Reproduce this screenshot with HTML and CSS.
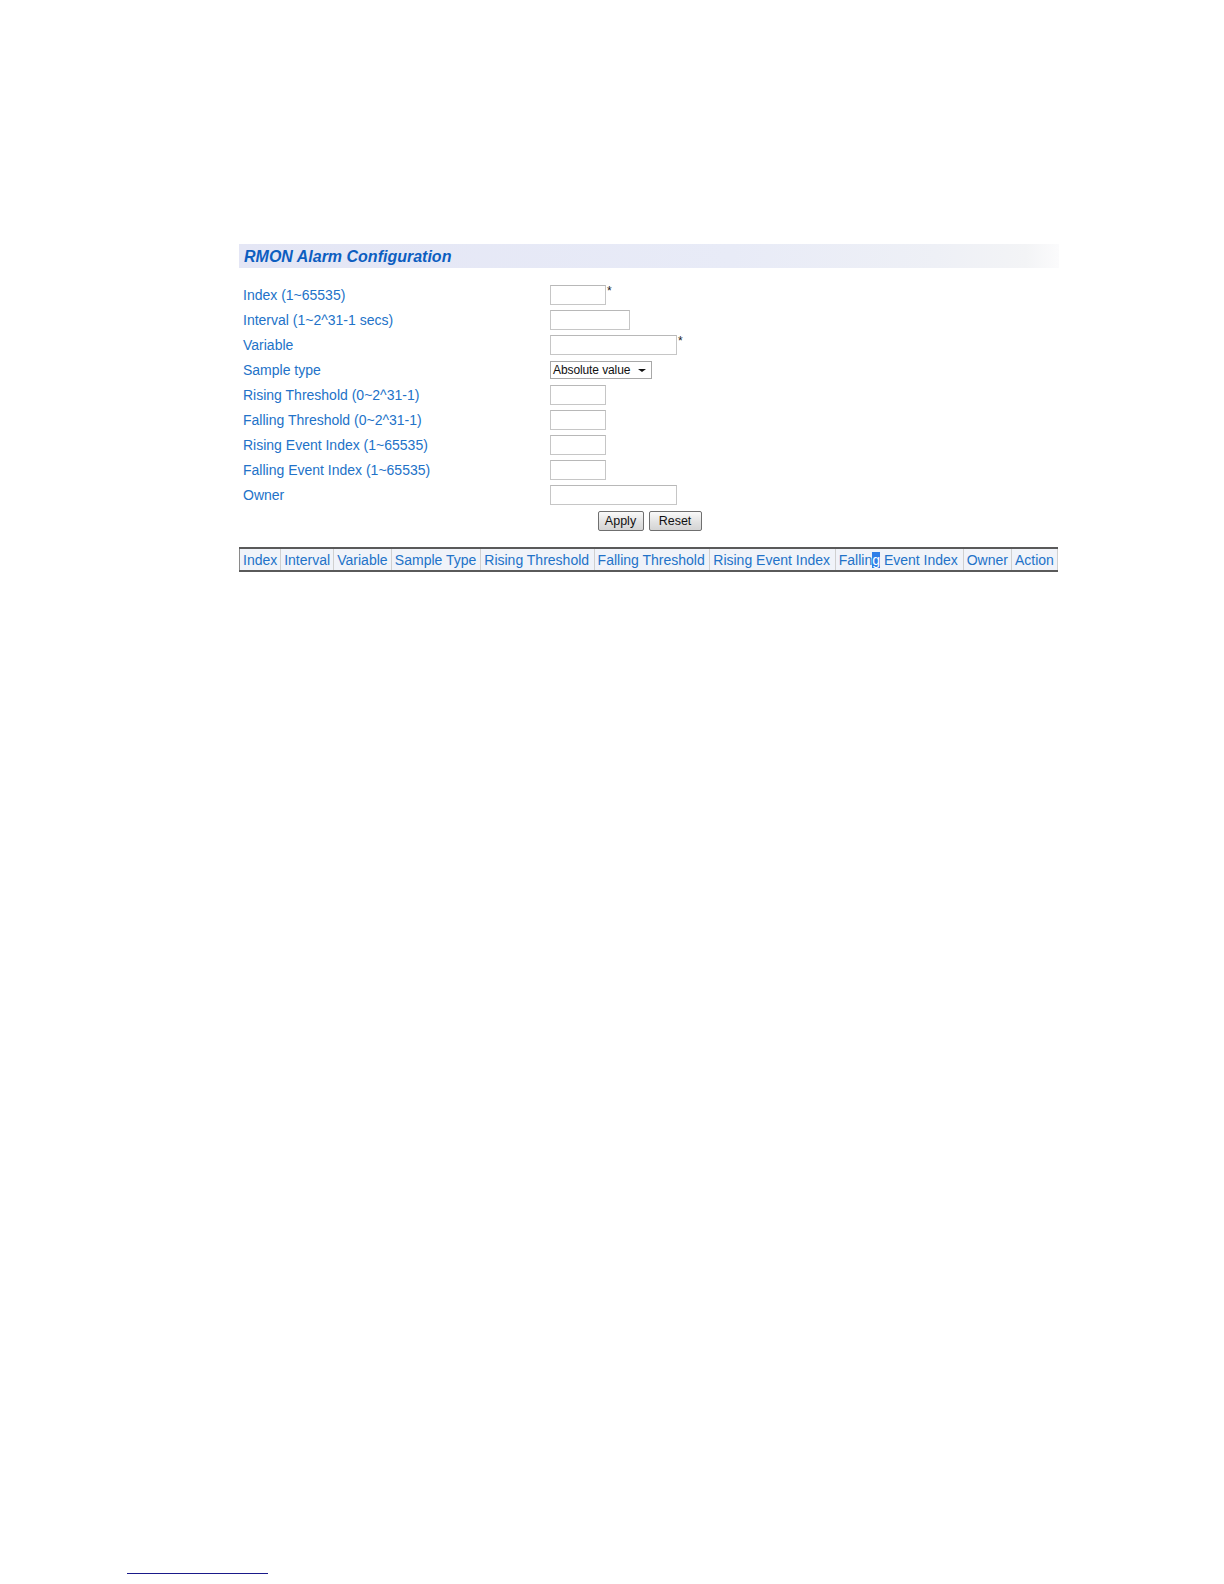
FILE: index.html
```html
<!DOCTYPE html>
<html>
<head>
<meta charset="utf-8">
<link rel="stylesheet" href="styles.css">
</head>
<body>
<div class="page">
  <div class="panel">
    <div class="title">RMON Alarm Configuration</div>
    <form class="form">
      <div class="row"><span class="label">Index (1~65535)</span><span class="field"><input class="in w56" type="text"><span class="req">*</span></span></div>
      <div class="row"><span class="label">Interval (1~2^31-1 secs)</span><span class="field"><input class="in w80" type="text"></span></div>
      <div class="row"><span class="label">Variable</span><span class="field"><input class="in w127" type="text"><span class="req">*</span></span></div>
      <div class="row"><span class="label">Sample type</span><span class="field"><span class="select">Absolute value<span class="arrow"></span></span></span></div>
      <div class="row"><span class="label">Rising Threshold (0~2^31-1)</span><span class="field"><input class="in w56" type="text"></span></div>
      <div class="row"><span class="label">Falling Threshold (0~2^31-1)</span><span class="field"><input class="in w56" type="text"></span></div>
      <div class="row"><span class="label">Rising Event Index (1~65535)</span><span class="field"><input class="in w56" type="text"></span></div>
      <div class="row"><span class="label">Falling Event Index (1~65535)</span><span class="field"><input class="in w56" type="text"></span></div>
      <div class="row"><span class="label">Owner</span><span class="field"><input class="in w127" type="text"></span></div>
      <div class="buttons"><span class="btn apply">Apply</span><span class="btn reset">Reset</span></div>
    </form>
    <table class="list">
      <tr>
        <th>Index</th><th>Interval</th><th>Variable</th><th>Sample Type</th><th>Rising Threshold</th><th>Falling Threshold</th><th>Rising Event Index</th><th>Fallin<span class="sel">g</span> Event Index</th><th>Owner</th><th>Action</th>
      </tr>
    </table>
  </div>
  <div class="footline"></div>
</div>
</body>
</html>
```
FILE: styles.css
```css
html, body {
  margin: 0;
  padding: 0;
  background: #ffffff;
}
body {
  width: 1224px;
  height: 1584px;
  font-family: "Liberation Sans", Arial, sans-serif;
  position: relative;
}
.page {
  padding-top: 244px;
}
.panel {
  margin-left: 239px;
  width: 820px;
}
.title {
  height: 24px;
  line-height: 25px;
  padding-left: 5px;
  font-size: 16px;
  font-weight: bold;
  font-style: italic;
  color: #0d5ec0;
  background: linear-gradient(to right, #e4e6f5 0%, #e8ebf7 60%, #eef0f6 85%, #f3f4f6 96%, #fbfbfc 100%);
}
.form {
  margin: 0;
  padding-top: 14px;
}
.row {
  display: flex;
  align-items: center;
  height: 25px;
}
.label {
  width: 311px;
  padding-left: 4px;
  box-sizing: border-box;
  font-size: 14px;
  color: #2272c8;
}
.field {
  display: flex;
  align-items: flex-start;
}
.in {
  box-sizing: border-box;
  height: 20px;
  margin: 0;
  padding: 0;
  border: 1px solid #c6c6c6;
  border-top-color: #b8b8b8;
  background: #fff;
}
.w56 { width: 56px; }
.w80 { width: 80px; }
.w127 { width: 127px; }
.req {
  font-size: 12px;
  color: #222;
  margin-left: 1px;
  line-height: 12px;
}
.select {
  box-sizing: border-box;
  width: 102px;
  height: 18px;
  border: 1px solid #a8a8a8;
  font-size: 12px;
  line-height: 16px;
  padding-left: 2px;
  color: #111;
  position: relative;
  letter-spacing: -0.1px;
}
.arrow {
  position: absolute;
  right: 5px;
  top: 7px;
  width: 0;
  height: 0;
  border-left: 4px solid transparent;
  border-right: 4px solid transparent;
  border-top: 3px solid #111;
}
.buttons {
  display: flex;
  justify-content: center;
  gap: 5px;
  padding-top: 4px;
  height: 20px;
  padding-left: 1px;
}
.btn {
  box-sizing: border-box;
  height: 20px;
  border: 1px solid #6f6f6f;
  border-radius: 2px;
  background: linear-gradient(#fafafa, #e2e2e2 55%, #d4d4d4);
  font-size: 12.5px;
  line-height: 18px;
  color: #111;
  text-align: center;
}
.apply { width: 46px; }
.reset { width: 53px; }
.list {
  margin-top: 16px;
  margin-left: 0;
  width: 819px;
  border-collapse: collapse;
  border-top: 2px solid #5a5a5a;
  border-bottom: 2px solid #5a5a5a;
  border-left: 1px solid #777;
  border-right: 1px solid #777;
}
.list th {
  font-weight: normal;
  font-size: 14px;
  color: #2272c8;
  background: #f0f3f9;
  border-left: 1px solid #8a8a8a;
  border-right: 1px solid #d0d0d0;
  height: 20px;
  padding: 1px 2px 0 3px;
  text-align: left;
  white-space: nowrap;
}
.sel {
  background: #2f7fe8;
  color: #fff;
}
.footline {
  position: absolute;
  left: 127px;
  top: 1573px;
  width: 141px;
  height: 1px;
  background: #1a1a8a;
}
```
